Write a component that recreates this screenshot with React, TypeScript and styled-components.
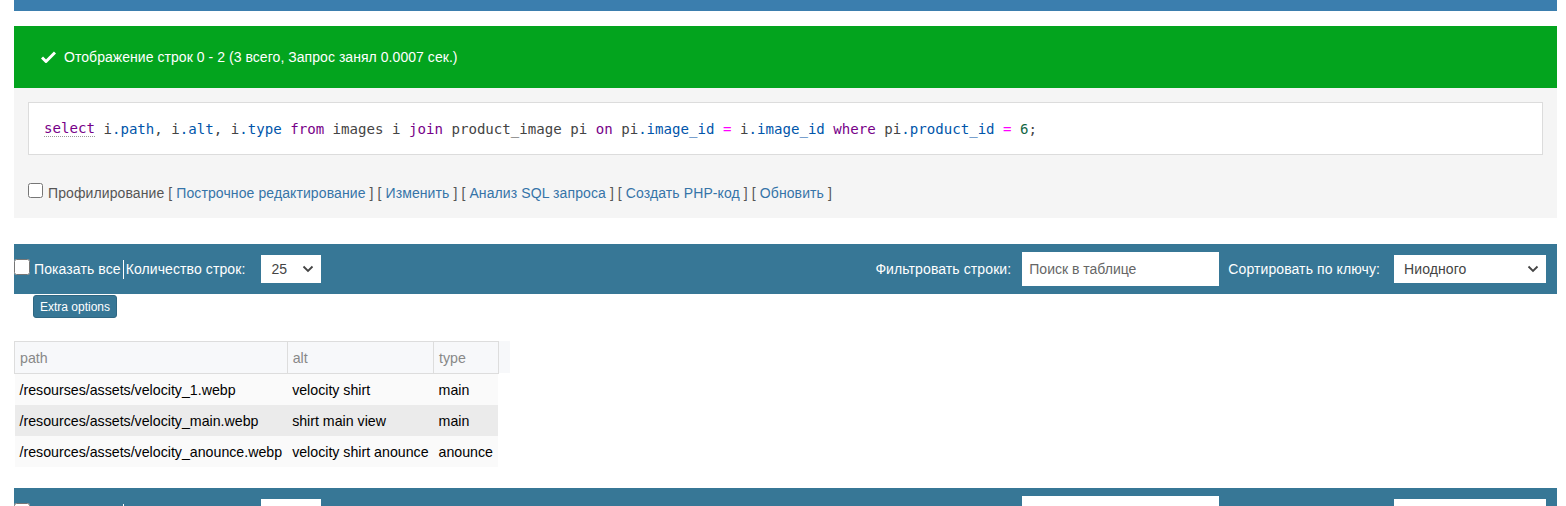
import { createGlobalStyle, styled } from "styled-components";

const GlobalStyle = createGlobalStyle`
  body {
    margin: 0;
    background: #fff;
    font-family: "Liberation Sans", Arial, sans-serif;
    font-size: 14px;
    color: #000;
  }
`;

const Page = styled.div`
  padding: 0 9px 0 14px;
  height: 506px;
  overflow: hidden;
`;

const TopBar = styled.div`
  height: 11px;
  background: #3b7eae;
  margin-bottom: 15px;
`;

const SuccessBar = styled.div`
  height: 62px;
  background: #03a41e;
  color: #fff;
  display: flex;
  align-items: center;
  padding-left: 27px;
  gap: 8px;
  font-size: 14px;
  letter-spacing: 0.05px;
`;

const QueryPanel = styled.div`
  background: #f5f5f5;
  padding: 14px 14px 17px 14px;
  margin-bottom: 26px;
`;

const CodeBox = styled.div`
  background: #fff;
  border: 1px solid #dcdcdc;
  height: 51px;
  display: flex;
  align-items: center;
  padding-left: 15px;
  font-family: "DejaVu Sans Mono", monospace;
  font-size: 14.1px;
  color: #444;
  white-space: pre;
`;

type Kind = "kw" | "prop" | "op" | "num" | "txt";

const Tok = styled.span<{ $kind: Kind; $under?: boolean }>`
  color: ${(p) =>
    p.$kind === "kw"
      ? "#770088"
      : p.$kind === "prop"
      ? "#0055aa"
      : p.$kind === "op"
      ? "#ff00ff"
      : p.$kind === "num"
      ? "#116644"
      : "#444"};
  border-bottom: ${(p) => (p.$under ? "1px dotted #999" : "none")};
`;

const ToolLine = styled.div`
  display: flex;
  align-items: center;
  margin-top: 30px;
  height: 16px;
  color: #555;
  font-size: 14px;
  letter-spacing: 0.1px;
  white-space: pre;
`;

const Check = styled.input.attrs({ type: "checkbox" })`
  width: 15px;
  height: 15px;
  margin: 0 5px 0 0;
  position: relative;
  top: -3px;
`;

const LinkText = styled.a`
  color: #3574a8;
  text-decoration: none;
`;

const NavBar = styled.div`
  background: #377796;
  height: 50px;
  display: flex;
  align-items: center;
  color: #fff;
  font-size: 14px;
  letter-spacing: 0.1px;
  white-space: nowrap;
`;

const NavCheck = styled(Check)`
  margin: 0 4px 0 0;
  width: 16px;
  height: 16px;
  top: -2px;
`;

const Divider = styled.span`
  width: 1px;
  height: 19px;
  background: #fff;
  margin: 0 2px 0 2px;
`;

const SelectBox = styled.div<{ $w: number }>`
  width: ${(p) => p.$w}px;
  height: 28px;
  background: #fff;
  color: #444;
  display: flex;
  align-items: center;
  justify-content: space-between;
  padding: 0 7px 0 10px;
  box-sizing: border-box;
  font-size: 14px;
  flex-shrink: 0;
`;

const SearchInput = styled.input.attrs({ type: "text" })`
  width: 197px;
  height: 34px;
  box-sizing: border-box;
  border: none;
  outline: none;
  padding: 0 7px;
  font-family: "Liberation Sans", Arial, sans-serif;
  font-size: 14px;
  color: #444;
  flex-shrink: 0;
  &::placeholder {
    color: #666;
  }
`;

const Spacer = styled.div`
  flex: 1;
`;

const Label = styled.span<{ $ml?: number; $mr?: number }>`
  margin-left: ${(p) => p.$ml ?? 0}px;
  margin-right: ${(p) => p.$mr ?? 0}px;
`;

const ExtraButton = styled.button`
  margin: 1px 0 0 19px;
  background: #377796;
  color: #fff;
  border: 1px solid #2f6782;
  border-radius: 3px;
  height: 23px;
  padding: 0 6px;
  font-family: "Liberation Sans", Arial, sans-serif;
  font-size: 12px;
  display: block;
`;

const TableWrap = styled.div`
  margin-top: 23px;
  margin-bottom: 21px;
  display: flex;
  align-items: flex-start;
`;

const DataTable = styled.table`
  border-collapse: collapse;
  font-size: 14.2px;
`;

const HeadCell = styled.th`
  background: #f7f8fa;
  border: 1px solid #dddddd;
  color: #888;
  font-weight: normal;
  text-align: left;
  height: 31px;
  padding: 0 5px;
`;

const Row = styled.tr<{ $even?: boolean }>`
  background: ${(p) => (p.$even ? "#ebebeb" : "#fafafa")};
`;

const Cell = styled.td`
  height: 31px;
  padding: 0 5px;
  white-space: nowrap;
`;

const HeadTail = styled.div`
  width: 11px;
  height: 32px;
  background: #f7f8fa;
`;

const Chevron = () => (
  <svg width="12" height="8" viewBox="0 0 12 8">
    <path d="M1.5 1.5 L6 6 L10.5 1.5" fill="none" stroke="#444" strokeWidth="1.8" />
  </svg>
);

const CheckIcon = () => (
  <svg width="15" height="12" viewBox="0 0 15 12">
    <path d="M1 6.5 L5 10.5 L14 1.5" fill="none" stroke="#fff" strokeWidth="3" strokeLinejoin="round" />
  </svg>
);

// sql tokens: [text, kind]
const sql: [string, Kind][] = [
  ["select", "kw"],
  [" i", "txt"],
  [".path", "prop"],
  [", i", "txt"],
  [".alt", "prop"],
  [", i", "txt"],
  [".type", "prop"],
  [" ", "txt"],
  ["from", "kw"],
  [" images i ", "txt"],
  ["join", "kw"],
  [" product_image pi ", "txt"],
  ["on", "kw"],
  [" pi", "txt"],
  [".image_id", "prop"],
  [" ", "txt"],
  ["=", "op"],
  [" i", "txt"],
  [".image_id", "prop"],
  [" ", "txt"],
  ["where", "kw"],
  [" pi", "txt"],
  [".product_id", "prop"],
  [" ", "txt"],
  ["=", "op"],
  [" ", "txt"],
  ["6", "num"],
  [";", "txt"],
];

const rows = [
  ["/resourses/assets/velocity_1.webp", "velocity shirt", "main"],
  ["/resources/assets/velocity_main.webp", "shirt main view", "main"],
  ["/resources/assets/velocity_anounce.webp", "velocity shirt anounce", "anounce"],
];

const Nav = () => (
  <NavBar>
    <NavCheck />
    <span>Показать все</span>
    <Divider />
    <span>Количество строк:</span>
    <Label $ml={16} />
    <SelectBox $w={60}>
      <span>25</span>
      <Chevron />
    </SelectBox>
    <Spacer />
    <Label $mr={11}>Фильтровать строки:</Label>
    <SearchInput placeholder="Поиск в таблице" />
    <Label $ml={9} $mr={14}>
      Сортировать по ключу:
    </Label>
    <SelectBox $w={152}>
      <span>Ниодного</span>
      <Chevron />
    </SelectBox>
    <Label $mr={11} />
  </NavBar>
);

export default function App() {
  return (
    <>
      <GlobalStyle />
      <Page>
        <TopBar />
        <SuccessBar>
          <CheckIcon />
          <span>Отображение строк 0 - 2 (3 всего, Запрос занял 0.0007 сек.)</span>
        </SuccessBar>
        <QueryPanel>
          <CodeBox>
            {sql.map(([t, k], i) => (
              <Tok key={i} $kind={k} $under={i === 0}>
                {t}
              </Tok>
            ))}
          </CodeBox>
          <ToolLine>
            <Check />
            {"Профилирование [ "}
            <LinkText>Построчное редактирование</LinkText>
            {" ] [ "}
            <LinkText>Изменить</LinkText>
            {" ] [ "}
            <LinkText>Анализ SQL запроса</LinkText>
            {" ] [ "}
            <LinkText>Создать PHP-код</LinkText>
            {" ] [ "}
            <LinkText>Обновить</LinkText>
            {" ]"}
          </ToolLine>
        </QueryPanel>
        <Nav />
        <ExtraButton>Extra options</ExtraButton>
        <TableWrap>
          <DataTable>
            <thead>
              <tr>
                <HeadCell>path</HeadCell>
                <HeadCell>alt</HeadCell>
                <HeadCell>type</HeadCell>
              </tr>
            </thead>
            <tbody>
              {rows.map((r, i) => (
                <Row key={r[0]} $even={i % 2 === 1}>
                  {r.map((c) => (
                    <Cell key={c}>{c}</Cell>
                  ))}
                </Row>
              ))}
            </tbody>
          </DataTable>
          <HeadTail />
        </TableWrap>
        <Nav />
      </Page>
    </>
  );
}
